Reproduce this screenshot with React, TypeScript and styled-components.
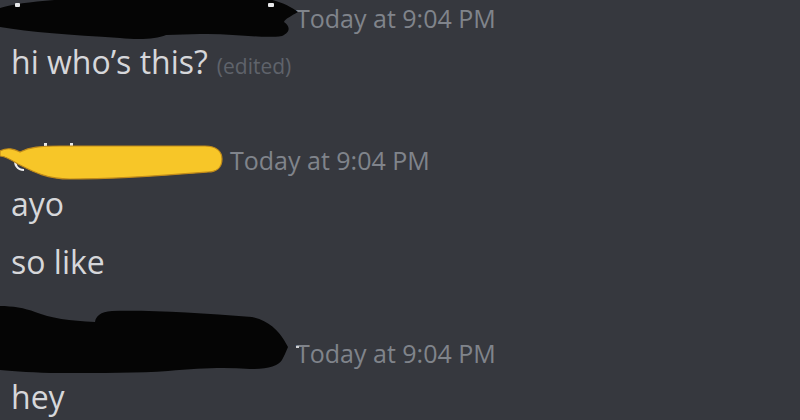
import React from "react";
import styled, { createGlobalStyle } from "styled-components";

const GlobalStyle = createGlobalStyle`
  html, body {
    margin: 0;
    padding: 0;
    background: #36383e;
    overflow: hidden;
  }
  body {
    font-family: "Open Sans", "Noto Sans", sans-serif;
  }
`;

const Chat = styled.div`
  width: 800px;
  height: 420px;
  box-sizing: border-box;
  padding-left: 11px;
  background: #36383e;
  overflow: hidden;
`;

const Group = styled.section<{ $gap: number }>`
  display: flex;
  flex-direction: column;
  margin-top: ${(p) => p.$gap}px;
`;

const Header = styled.div`
  display: flex;
  align-items: center;
  height: 36px;
`;

const NameSlot = styled.div<{ $w: number }>`
  position: relative;
  width: ${(p) => p.$w}px;
  height: 36px;
  flex-shrink: 0;
`;

const Scribble = styled.svg<{ $top: number }>`
  position: absolute;
  left: -11px;
  top: ${(p) => p.$top}px;
  overflow: visible;
`;

const Timestamp = styled.span`
  font-size: 25px;
  line-height: 36px;
  color: #80848b;
  white-space: nowrap;
`;

const Line = styled.div<{ $first?: boolean }>`
  font-size: 32px;
  line-height: 46px;
  color: #d6d7da;
  margin-top: ${(p) => (p.$first ? 2.5 : 12)}px;
  white-space: nowrap;
`;

const Edited = styled.span`
  font-size: 21px;
  color: #5f636b;
  margin-left: 9px;
`;

const BlackScribbleTop = () => (
  <Scribble $top={-2} width={310} height={42} viewBox="0 -2 310 42">
    <path
      d="M0,8 C20,2 60,-2 120,-2 L262,-2 C278,0 290,6 298,12 C291,16 285,19 284,22 C290,26 291,32 282,36 C262,39 232,33 200,34 L166,35 C156,39 140,40 120,38 C70,35 30,32 0,27 Z"
      fill="#050505"
    />
    <rect x={15} y={3} width={5} height={4} rx={1} fill="#e8e8ea" />
    <rect x={268} y={3} width={6} height={4} rx={1} fill="#e8e8ea" />
  </Scribble>
);

const YellowScribble = () => (
  <Scribble $top={1.7} width={232} height={40} viewBox="0 140 232 40">
    <path
      d="M16,156 C14,160 17,166 24,166"
      fill="none"
      stroke="#eeeeee"
      strokeWidth={2.2}
    />
    <rect x={44} y={139} width={3} height={8} fill="#e6e6e6" />
    <rect x={70} y={139} width={3} height={8} fill="#e6e6e6" />
    <path
      d="M0,147 C8,143 14,145 20,148 C30,143 40,142 60,142 L205,142 C217,142 222,148 222,155 C222,163 217,168 208,168 C170,171 120,175 70,175 C45,175 30,166 18,160 C10,155 5,152 0,152 Z"
      fill="#f7c628"
      stroke="#c08a1a"
      strokeWidth={1.2}
    />
  </Scribble>
);

const BlackScribbleBottom = () => (
  <Scribble $top={-33} width={310} height={74} viewBox="0 298 310 74">
    <path
      d="M0,302 C12,302 25,304 35,308 C50,314 70,317 95,318 C96,312 100,308 112,307 C150,306 200,309 252,313 C268,316 278,326 284,336 L288,343 C286,348 284,352 282,356 C278,362 268,365 250,365 C225,363 200,364 168,367 C140,369 100,369 60,369 C35,369 15,367 0,366 Z"
      fill="#050505"
    />
    <rect x={296} y={342} width={3} height={2} fill="#cfd0d2" />
  </Scribble>
);

export default function App() {
  return (
    <>
      <GlobalStyle />
      <Chat>
        <Group $gap={0}>
          <Header>
            <NameSlot $w={285}>
              <BlackScribbleTop />
            </NameSlot>
            <Timestamp>Today at 9:04 PM</Timestamp>
          </Header>
          <Line $first>
            hi who’s this?<Edited>(edited)</Edited>
          </Line>
        </Group>
        <Group $gap={53.8}>
          <Header>
            <NameSlot $w={219}>
              <YellowScribble />
            </NameSlot>
            <Timestamp>Today at 9:04 PM</Timestamp>
          </Header>
          <Line $first>ayo</Line>
          <Line>so like</Line>
        </Group>
        <Group $gap={50.5}>
          <Header>
            <NameSlot $w={285}>
              <BlackScribbleBottom />
            </NameSlot>
            <Timestamp>Today at 9:04 PM</Timestamp>
          </Header>
          <Line $first>hey</Line>
        </Group>
      </Chat>
    </>
  );
}
